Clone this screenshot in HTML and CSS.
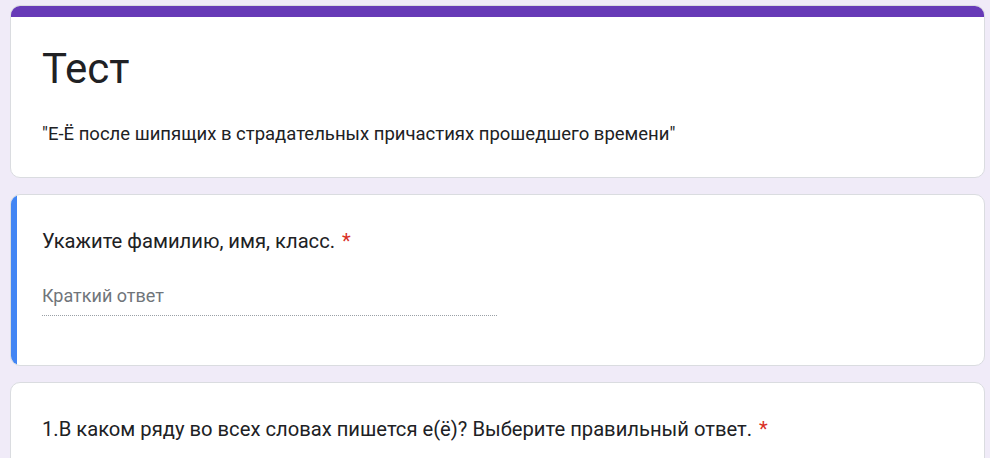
FILE: index.html
```html
<!DOCTYPE html>
<html lang="ru">
<head>
  <meta charset="UTF-8">
  <title>Тест</title>
  <link rel="stylesheet" href="styles.css">
</head>
<body>
  <div class="form">
    <section class="card card-head">
      <div class="head-bar"></div>
      <div class="head-body">
        <h1 class="form-title">Тест</h1>
        <p class="form-desc">"Е-Ё после шипящих в страдательных причастиях прошедшего времени"</p>
      </div>
    </section>

    <section class="card card-active">
      <div class="question">Укажите фамилию, имя, класс. <span class="req">*</span></div>
      <div class="short-answer">Краткий ответ</div>
    </section>

    <section class="card">
      <div class="question">1.В каком ряду во всех словах пишется е(ё)? Выберите правильный ответ. <span class="req">*</span></div>
    </section>
  </div>
</body>
</html>
```

FILE: styles.css
```css
body {
  margin: 0;
  background: #f0ebf8;
  font-family: Roboto, 'Noto Sans', Arial, sans-serif;
  color: #202124;
  overflow: hidden;
}
.form { padding: 5px 5px 0 10px; }

.card {
  background: #fff;
  border: 1px solid #dadce0;
  border-radius: 10px;
  margin-bottom: 16px;
  padding: 0 31px;
  position: relative;
  overflow: hidden;
}

.card-head { padding: 0; height: 171px; }
.head-bar { height: 11px; background: #673ab7; }
.head-body { padding: 0 31px; }
.form-title {
  margin: 26px 0 0;
  font-size: 42px;
  font-weight: 400;
  line-height: 52px;
}
.form-desc {
  margin: 27px 0 0;
  font-size: 18.5px;
  line-height: 24px;
}

.card-active { height: 170px; }
.card-active::before {
  content: "";
  position: absolute;
  left: 0; top: 0; bottom: 0;
  width: 6px;
  background: #4285f4;
}

.question {
  margin-top: 32px;
  font-size: 20.2px;
  line-height: 28px;
}
.req { color: #d93025; margin-left: 2px; }

.short-answer {
  margin-top: 29px;
  width: 455px;
  font-size: 18px;
  line-height: 24px;
  color: #70757a;
  padding-bottom: 7px;
  border-bottom: 1px dotted #9aa0a6;
}

.card:last-child { height: 120px; }
```
